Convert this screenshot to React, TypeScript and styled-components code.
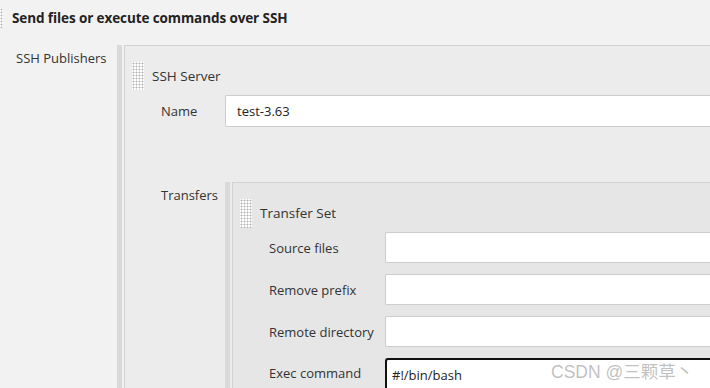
import React from 'react'
import styled, {createGlobalStyle} from 'styled-components'

const GlobalStyle = createGlobalStyle`
    html, body, #root {
        margin: 0;
        padding: 0;
        width: 100%;
        height: 100%;
        overflow: hidden;
    }

    body {
        background: #f2f2f2;
        font-family: "Open Sans", "Noto Sans", "Noto Sans CJK SC", sans-serif;
        font-size: 13px;
        color: #333;
    }
`

const Page = styled.div`
    position: relative;
    width: 710px;
    height: 388px;
    overflow: hidden;
    background: #f2f2f2;
`

const Grip = styled.div<{$w?: number; $h?: number}>`
    flex: none;
    width: ${p => p.$w ?? 12}px;
    height: ${p => p.$h ?? 28}px;
    background-color: #fff;
    background-image: radial-gradient(circle, #b4b4b4 0.9px, transparent 1.1px);
    background-size: 3px 3px;
    background-position: 0 0;
`

const SectionHeader = styled.div`
    display: flex;
    align-items: center;
    gap: 9px;
    height: 36px;
    margin-top: 0;
    padding-bottom: 9px;
`

const HeaderTitle = styled.h3`
    margin: 0;
    font-size: 13.5px;
    font-weight: 700;
    color: #222;
    letter-spacing: -0.1px;
`

const Row = styled.div<{$label: number}>`
    display: grid;
    grid-template-columns: ${p => p.$label}px 1fr;
    align-items: center;
`

const TopLabel = styled.div<{$pad: number; $left?: number}>`
    align-self: start;
    padding-top: ${p => p.$pad}px;
    padding-left: ${p => p.$left ?? 0}px;
    line-height: 18px;
    white-space: nowrap;
`

const Label = styled.div`
    line-height: 18px;
    white-space: nowrap;
`

const Chunk = styled.div`
    display: flex;
    border-left: 5px solid #d9d9d9;
    padding-left: 2px;
    min-height: 100%;
`

const Panel = styled.div<{$bg: string}>`
    flex: 1;
    background: ${p => p.$bg};
    border-top: 1px solid #d2d2d2;
    border-left: 1px solid #d2d2d2;
    padding: 16px 0 0 7px;
`

const PanelTitle = styled.div`
    display: flex;
    align-items: center;
    gap: 8px;
    height: 28px;
    font-size: 13.5px;
`

const Fields = styled.div<{$top: number; $gap: number}>`
    display: flex;
    flex-direction: column;
    gap: ${p => p.$gap}px;
    padding-top: ${p => p.$top}px;
    padding-left: 29px;
`

const Input = styled.div<{$h?: number}>`
    box-sizing: border-box;
    height: ${p => p.$h ?? 31}px;
    display: flex;
    align-items: center;
    padding-left: 11px;
    background: #fff;
    border: 1px solid #cdcdcd;
    border-right: none;
    border-radius: 2px 0 0 2px;
    color: #222;
`

const TextArea = styled.div`
    height: 60px;
    padding: 5px 0 0 5px;
    background: #fff;
    border: 2px solid #111;
    border-right: none;
    border-radius: 3px 0 0 0;
    color: #222;
    line-height: 20px;
`

const Watermark = styled.div`
    position: absolute;
    left: 551px;
    top: 358px;
    font-family: "Liberation Sans", "Noto Sans CJK SC", sans-serif;
    font-size: 17.5px;
    color: rgba(130, 130, 130, 0.5);
    white-space: nowrap;
    pointer-events: none;
`

export default function App() {
    return (
        <Page>
            <GlobalStyle/>
            <SectionHeader>
                <Grip $w={3} $h={20}/>
                <HeaderTitle>Send files or execute commands over SSH</HeaderTitle>
            </SectionHeader>
            <Row $label={117}>
                <TopLabel $pad={4} $left={16}>SSH Publishers</TopLabel>
                <Chunk>
                    <Panel $bg="#ececec">
                        <PanelTitle>
                            <Grip/>
                            <span>SSH Server</span>
                        </PanelTitle>
                        <Fields $top={5} $gap={55}>
                            <Row $label={64}>
                                <Label>Name</Label>
                                <Input $h={32}>test-3.63</Input>
                            </Row>
                            <Row $label={64}>
                                <TopLabel $pad={4}>Transfers</TopLabel>
                                <Chunk>
                                    <Panel $bg="#e6e6e6">
                                        <PanelTitle>
                                            <Grip $h={29}/>
                                            <span>Transfer Set</span>
                                        </PanelTitle>
                                        <Fields $top={5} $gap={11}>
                                            <Row $label={116}>
                                                <Label>Source files</Label>
                                                <Input/>
                                            </Row>
                                            <Row $label={116}>
                                                <Label>Remove prefix</Label>
                                                <Input/>
                                            </Row>
                                            <Row $label={116}>
                                                <Label>Remote directory</Label>
                                                <Input/>
                                            </Row>
                                            <Row $label={116}>
                                                <TopLabel $pad={6}>Exec command</TopLabel>
                                                <TextArea>#!/bin/bash</TextArea>
                                            </Row>
                                        </Fields>
                                    </Panel>
                                </Chunk>
                            </Row>
                        </Fields>
                    </Panel>
                </Chunk>
            </Row>
            <Watermark>CSDN @三颗草丶</Watermark>
        </Page>
    )
}
